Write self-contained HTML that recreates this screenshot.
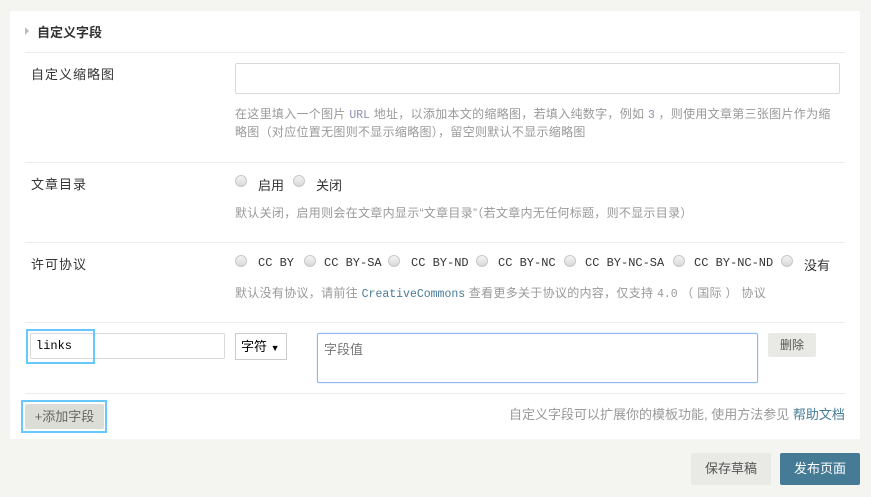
<!DOCTYPE html>
<html><head><meta charset="utf-8"><style>
body{margin:0;width:871px;height:497px;background:#f4f4f0;font-family:"Liberation Sans","Noto Sans CJK SC",sans-serif;position:relative;overflow:hidden}
.p{position:absolute;left:10px;top:11px;width:850px;height:428px;background:#fff}
.a{position:absolute;white-space:nowrap}
.hr{position:absolute;left:25px;width:820px;height:1px;background:#ececec}
.lab{font-size:13px;color:#333;letter-spacing:1px}
.d{font-size:12px;color:#999;letter-spacing:0.3px}
code,.m{font-family:"Liberation Mono",monospace;font-size:11.5px;letter-spacing:0}
.r{position:absolute;width:10px;height:10px;border-radius:50%;border:1px solid #c8c8c8;background:linear-gradient(#f4f4f4,#d8d8d8)}
.rl{font-size:12px;color:#333}
.btn{position:absolute;border-radius:2px;text-align:center}
</style></head><body>
<div class="p"></div>
<div class="a" style="left:25px;top:27px;width:0;height:0;border-left:4px solid #bbb;border-top:4px solid transparent;border-bottom:4px solid transparent"></div>
<div class="a" style="left:37px;top:22px;font-size:13px;font-weight:bold;color:#333">自定义字段</div>
<div class="hr" style="top:52px"></div>
<div class="a lab" style="left:31px;top:64px">自定义缩略图</div>
<div class="a" style="left:235px;top:63px;width:603px;height:29px;border:1px solid #d9d9d9;border-radius:2px"></div>
<div class="a d" style="left:235px;top:105px">在这里填入一个图片 <code style="color:#8b8fb0">URL</code> 地址，以添加本文的缩略图，若填入纯数字，例如 <code style="color:#8b8fb0">3</code> ，则使用文章第三张图片作为缩</div>
<div class="a d" style="left:235px;top:123px">略图（对应位置无图则不显示缩略图），留空则默认不显示缩略图</div>
<div class="hr" style="top:162px"></div>
<div class="a lab" style="left:31px;top:174px">文章目录</div>
<div class="r" style="left:235px;top:175px"></div><div class="a rl" style="left:258px;top:175px;font-size:13px">启用</div>
<div class="r" style="left:293px;top:175px"></div><div class="a rl" style="left:316px;top:175px;font-size:13px">关闭</div>
<div class="a d" style="left:235px;top:204px">默认关闭，启用则会在文章内显示“文章目录”（若文章内无任何标题，则不显示目录）</div>
<div class="hr" style="top:242px"></div>
<div class="a lab" style="left:31px;top:254px">许可协议</div>
<div class="r" style="left:235px;top:255px"></div><div class="a rl m" style="left:258px;top:256px">CC BY</div>
<div class="r" style="left:304px;top:255px"></div><div class="a rl m" style="left:324px;top:256px">CC BY-SA</div>
<div class="r" style="left:388px;top:255px"></div><div class="a rl m" style="left:411px;top:256px">CC BY-ND</div>
<div class="r" style="left:476px;top:255px"></div><div class="a rl m" style="left:498px;top:256px">CC BY-NC</div>
<div class="r" style="left:564px;top:255px"></div><div class="a rl m" style="left:585px;top:256px">CC BY-NC-SA</div>
<div class="r" style="left:673px;top:255px"></div><div class="a rl m" style="left:694px;top:256px">CC BY-NC-ND</div>
<div class="r" style="left:781px;top:255px"></div><div class="a rl" style="left:804px;top:255px;font-size:13px">没有</div>
<div class="a d" style="left:235px;top:284px">默认没有协议，请前往 <code style="color:#467b96">CreativeCommons</code> 查看更多关于协议的内容，仅支持 <code>4.0</code> （ 国际 ） 协议</div>
<div class="hr" style="top:322px"></div>
<div class="a" style="left:30px;top:333px;width:193px;height:24px;border:1px solid #d9d9d9;border-radius:2px"></div>
<div class="a" style="left:26px;top:329px;width:65px;height:31px;border:2px solid #66c8ff"></div>
<div class="a m" style="left:36px;top:339px;font-size:12px;color:#000">links</div>
<div class="a" style="left:235px;top:333px;border:1px solid #ccc;font-size:13px;line-height:25px;padding-left:5px;box-sizing:border-box;width:52px;height:27px">字符 <span style="font-size:9px">▼</span></div>
<div class="a" style="left:317px;top:333px;width:439px;height:48px;border:1px solid #8fb8f0;box-shadow:0 0 1px #8fb8f0;border-radius:2px"></div>
<div class="a" style="left:324px;top:339px;font-size:13px;color:#777">字段值</div>
<div class="btn" style="left:768px;top:333px;width:48px;height:24px;background:#e9e9e6;font-size:12px;line-height:24px;color:#555">删除</div>
<div class="hr" style="top:393px"></div>
<div class="a" style="left:21px;top:400px;width:82px;height:29px;border:2px solid #66c8ff"></div>
<div class="btn" style="left:25px;top:404px;width:79px;height:25px;background:#ddddd8;font-size:13px;line-height:25px;color:#666">+添加字段</div>
<div class="a" style="left:509px;top:404px;font-size:13px;color:#999">自定义字段可以扩展你的模板功能, 使用方法参见 <span style="color:#467b96">帮助文档</span></div>
<div class="btn" style="left:691px;top:453px;width:80px;height:32px;background:#e9e9e6;font-size:13px;line-height:32px;color:#555">保存草稿</div>
<div class="btn" style="left:780px;top:453px;width:80px;height:32px;background:#467b96;font-size:13px;line-height:32px;color:#fff">发布页面</div>
</body></html>
